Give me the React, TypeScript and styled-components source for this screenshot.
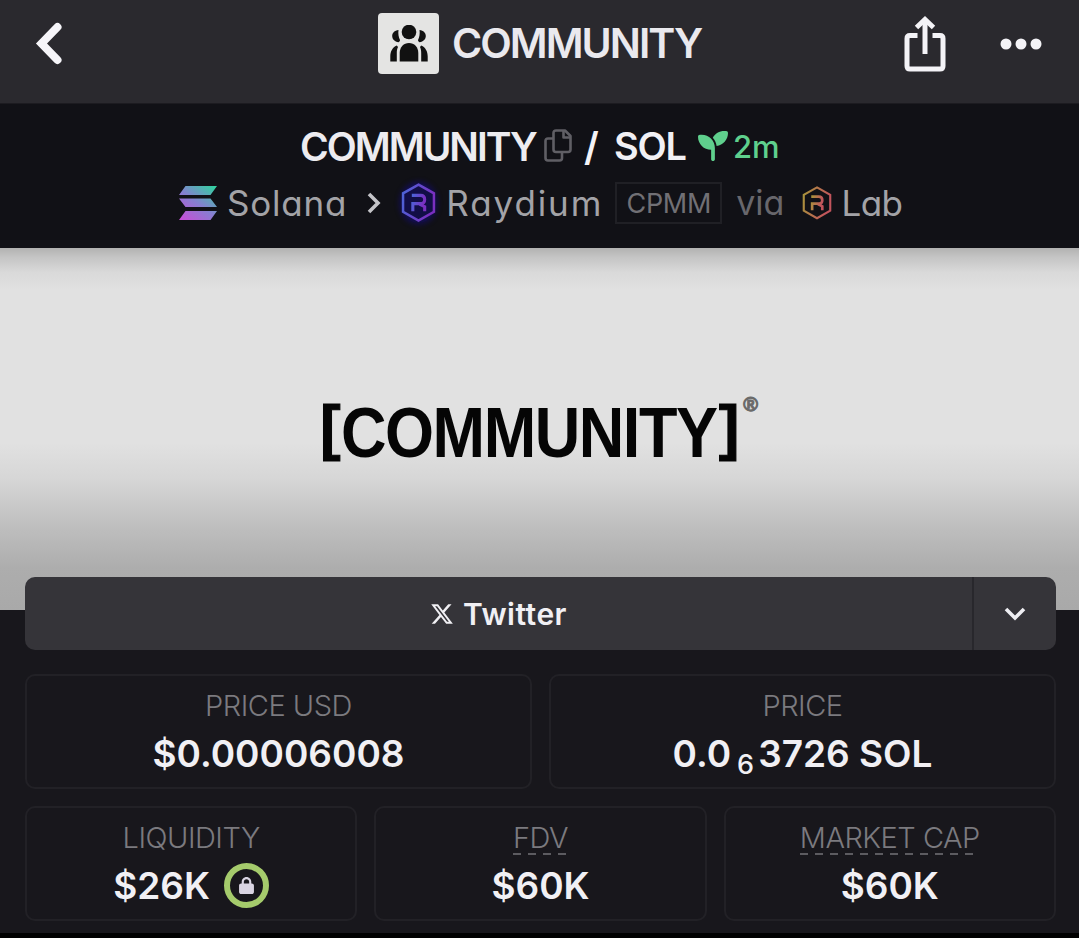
import type { ReactNode } from 'react';

import styled, { createGlobalStyle } from 'styled-components';
import { FaLock, FaSeedling, FaXTwitter } from 'react-icons/fa6';

const BOTTOM_STATS = [
  { label: 'LIQUIDITY', value: '$26K', locked: true },
  { label: 'FDV', value: '$60K', hint: true },
  { label: 'MARKET CAP', value: '$60K', hint: true },
];

const BackIcon = () => (
  <svg width='30' height='48' viewBox='0 0 30 48' fill='none'>
    <path d='M23.500 7L7.500 23.500L23.500 40' stroke='#f6f5f9' strokeWidth='8' strokeLinecap='round' />
  </svg>
);

const PeopleIcon = () => (
  <svg width='38' height='38' viewBox='0 0 38 38' fill='#111'>
    <circle cx='19' cy='7' r='7.300' />
    <path d='M8.500 5C4.500 5.500 2.200 8 2.200 11s2.300 5.800 6.300 6.200c1-.4 1.500-1.200 1.500-2.200C8.500 12 8 8.500 8.500 5z' />
    <path d='M29.500 5c4 .5 6.300 3 6.300 6s-2.300 5.800-6.300 6.200c-1-.4-1.500-1.200-1.500-2.200 1.500-3 2-6.500 1.500-10z' />
    <path d='M9.700 36.500V28c0-6 4-10 9.300-10s9.300 4 9.300 10v8.500z' />
    <path d='M0.300 36.500v-5c0-5 2-9 6.500-11l1.200 1.500c-1 2-1.200 4-1.200 6v8.500z' />
    <path d='M37.700 36.500v-5c0-5-2-9-6.500-11L30 22c1 2 1.200 4 1.200 6v8.500z' />
  </svg>
);

const ShareIcon = () => (
  <svg width='42' height='56' viewBox='0 0 42 56' fill='none' stroke='#f4f3f7' strokeWidth='5'>
    <path d='M13.500 19.500H6q-3 0-3 3V50q0 3 3 3h30q3 0 3-3V22.500q0-3-3-3h-7.500' />
    <path d='M21 38V5' />
    <path d='M12.500 11.500L21 3.500l8.500 8' />
  </svg>
);

const DotsIcon = () => (
  <svg width='42' height='12' viewBox='0 0 42 12' fill='#f4f3f7'>
    <circle cx='6' cy='6' r='5.500' />
    <circle cx='21' cy='6' r='5.500' />
    <circle cx='36' cy='6' r='5.500' />
  </svg>
);

const CopyIcon = () => (
  <svg width='28' height='34' viewBox='0 0 28 34' fill='none' stroke='#605f65' strokeWidth='2.600' strokeLinejoin='round'>
    <path d='M9.500 4q0-2.500 2.500-2.500h9L26.500 7v13.500q0 2.500-2.500 2.500H12q-2.500 0-2.500-2.500z' />
    <path d='M19.500 2v6.500H26' />
    <path d='M9.500 9.500H4q-2.500 0-2.500 2.500v17q0 2.500 2.500 2.500h11.500q2.500 0 2.500-2.500v-6' />
  </svg>
);

const SolanaIcon = () => (
  <svg width='40' height='35' viewBox='0 0 40 35'>
    <defs>
      <linearGradient id='sol' gradientUnits='userSpaceOnUse' x1='34' y1='0' x2='8' y2='36'>
        <stop offset='0' stopColor='#36cda2' />
        <stop offset='.5' stopColor='#8580d0' />
        <stop offset='1' stopColor='#c550d7' />
      </linearGradient>
    </defs>
    <path fill='url(#sol)' d='M7.500 0H39l-6.500 9H1zM1 12.500h31.500l6.500 8.500H7.500zM7.500 25H39l-6.500 9H1z' />
  </svg>
);

const RayIcon = ({ id, from, to, width }: { id: string; from: string; to: string; width: number }) => (
  <svg width={width} height={width * 1.12} viewBox='0 0 34 38' fill='none'>
    <defs>
      <linearGradient id={id} x1='0' y1='0' x2='1' y2='0.300'>
        <stop offset='0' stopColor={from} />
        <stop offset='1' stopColor={to} />
      </linearGradient>
    </defs>
    <g stroke={`url(#${id})`} strokeWidth='2.400'>
      <path d='M17 1.500L32 10v18L17 36.500L2 28V10z' />
      <path d='M10.500 12H19q4 0 4 4t-4 4h-7.500V27.500M18 20.500l5 2.500v4.500' strokeWidth='3' />
    </g>
  </svg>
);

const Chevron = ({ down }: { down?: boolean }) => (
  <ChevronSvg $down={down} width='14' height='24' viewBox='0 0 14 24' fill='none'>
    <path d='M2 3l9 9-9 9' stroke={down ? '#eeeef2' : '#c4c4c8'} strokeWidth='3.600' />
  </ChevronSvg>
);

const Stat = ({ label, hint, children }: { label: string; hint?: boolean; children: ReactNode }) => (
  <Card>
    <Label $hint={hint}>{label}</Label>
    <Value>{children}</Value>
  </Card>
);

export default function App() {
  return (
    <Page>
      <GlobalStyle />
      <Header>
        <BackIcon />
        <TokenTitle>
          <Avatar>
            <PeopleIcon />
          </Avatar>
          <TokenName>COMMUNITY</TokenName>
        </TokenTitle>
        <Actions>
          <ShareIcon />
          <DotsIcon />
        </Actions>
      </Header>

      <Pair>
        <PairRow>
          <PairName>COMMUNITY</PairName>
          <CopyIcon />
          <Slash>/</Slash>
          <Quote>SOL</Quote>
          <Age>
            <FaSeedling size={30} />
            <span>2m</span>
          </Age>
        </PairRow>
        <DexRow>
          <SolanaIcon />
          <DexName $left={9} $spacing={0.8}>Solana</DexName>
          <ChevronBox>
            <Chevron />
          </ChevronBox>
          <Glow>
            <RayIcon id='ray' from='#4a66d8' to='#7a2fc0' width={35} />
          </Glow>
          <DexName $left={10} $spacing={1.9}>Raydium</DexName>
          <Pool>CPMM</Pool>
          <Via>via</Via>
          <RayIcon id='lab' from='#a8963a' to='#c2545c' width={30} />
          <DexName $left={9} $spacing={-0.6}>Lab</DexName>
        </DexRow>
      </Pair>

      <Banner>
        <Bracket>[</Bracket>
        <Wordmark>COMMUNITY</Wordmark>
        <Bracket>]</Bracket>
        <Registered>®</Registered>
      </Banner>

      <Info>
        <Social>
          <TwitterLink>
            <FaXTwitter size={24} />
            <span>Twitter</span>
          </TwitterLink>
          <More>
            <Chevron down />
          </More>
        </Social>

        <Row>
          <Stat label='PRICE USD'>$0.00006008</Stat>
          <Stat label='PRICE'>
            0.0<Sub>6</Sub>3726 SOL
          </Stat>
        </Row>
        <Row>
          {BOTTOM_STATS.map(({ label, value, hint, locked }) => (
            <Stat key={label} label={label} hint={hint}>
              {value}
              {locked && (
                <LockBadge>
                  <FaLock size={17} />
                </LockBadge>
              )}
            </Stat>
          ))}
        </Row>
      </Info>
    </Page>
  );
}

const GlobalStyle = createGlobalStyle`
  * {
    box-sizing: border-box;
  }

  body {
    margin: 0;
    background: #000;
  }

  svg {
    flex-shrink: 0;
    display: block;
  }
`;

const Page = styled.div`
  width: 1079px;
  height: 938px;
  overflow: hidden;
  display: flex;
  flex-direction: column;
  background: #000;
  font-family: Inter, 'Open Sans', sans-serif;
  font-feature-settings: 'cv11';
  line-height: 1;
  white-space: nowrap;
`;

const Header = styled.header`
  height: 104px;
  padding: 0 37px 16px 34px;
  display: grid;
  grid-template-columns: 344px 1fr auto;
  align-items: center;
  background: #2a292e;
  border-bottom: 1px solid #1c1b20;
`;

const TokenTitle = styled.div`
  display: flex;
  align-items: center;
  gap: 13px;
`;

const Avatar = styled.div`
  width: 61px;
  height: 61px;
  border-radius: 4px;
  background: #e4e4e3;
  display: flex;
  align-items: center;
  justify-content: center;
`;

const TokenName = styled.h1`
  margin: 0;
  color: #eae9ee;
  font-size: 41px;
  font-weight: 600;
  letter-spacing: -1.95px;
`;

const Actions = styled.div`
  display: flex;
  align-items: center;
  gap: 54px;
`;

const Pair = styled.section`
  height: 144px;
  background: #111116;
  padding-top: 20px;
`;

const PairRow = styled.div`
  height: 44px;
  padding-left: 300px;
  display: flex;
  align-items: center;
`;

const PairName = styled.h2`
  margin: 0;
  width: 244px;
  color: #edecf0;
  font-size: 39px;
  font-weight: 600;
  letter-spacing: -2px;
`;

const Slash = styled.span`
  margin-left: 12px;
  width: 30px;
  color: #f4f3f7;
  font-size: 39px;
  font-weight: 600;
`;

const Quote = styled.span`
  width: 84px;
  color: #f1f0f4;
  font-size: 38px;
  font-weight: 600;
  letter-spacing: -1.2px;
`;

const Age = styled.span`
  display: flex;
  align-items: center;
  gap: 5px;
  color: #5fd08d;
  font-size: 31px;
  font-weight: 500;
`;

const DexRow = styled.div`
  height: 44px;
  margin-top: 13px;
  padding-left: 178px;
  display: flex;
  align-items: center;
`;

const DexName = styled.span<{ $left: number; $spacing: number }>`
  margin-left: ${({ $left }) => $left}px;
  color: #a3a3a7;
  font-size: 35px;
  letter-spacing: ${({ $spacing }) => $spacing}px;
`;

const ChevronBox = styled.span`
  margin: 0 20px;
`;

const ChevronSvg = styled.svg<{ $down?: boolean }>`
  transform: ${({ $down }) => ($down ? 'rotate(90deg)' : 'none')};
`;

const Glow = styled.span`
  border-radius: 50%;
  background: rgba(20, 10, 130, 0.45);
  box-shadow: 0 0 5px 2px rgba(20, 10, 130, 0.45);
`;

const Pool = styled.span`
  width: 107px;
  height: 42px;
  margin-left: 12px;
  border: 2px solid #202025;
  display: flex;
  align-items: center;
  justify-content: center;
  color: #717075;
  font-size: 27px;
  letter-spacing: -0.3px;
`;

const Via = styled.span`
  margin: 0 18px 0 14px;
  color: #68676c;
  font-size: 34px;
`;

const Banner = styled.section`
  height: 362px;
  padding: 0 0 0 320px;
  display: flex;
  align-items: flex-start;
  background: linear-gradient(
    #b2b2b1 0,
    #c4c4c4 9px,
    #d9d9d9 24px,
    #e1e1e1 42px,
    #e1e1e1 195px,
    #d6d6d6 232px,
    #c0c0c0 275px,
    #adadad 320px,
    #a9a9a9 362px
  );
  color: #050505;
  font-family: 'Liberation Sans', Arial, sans-serif;
  font-weight: 700;
`;

const Bracket = styled.span`
  margin-top: 148px;
  font-size: 62px;
  -webkit-text-stroke: 1px #050505;
`;

const Wordmark = styled.span`
  width: 378px;
  margin-top: 150px;
  font-size: 70px;
  letter-spacing: -1.6px;
  transform: scaleX(0.9);
  transform-origin: left;
`;

const Registered = styled.span`
  margin: 146px 0 0 4px;
  color: #6a6a6a;
  font-size: 20px;
  -webkit-text-stroke: 1px #6a6a6a;
`;

const Info = styled.section`
  height: 323px;
  padding: 0 23px 0 25px;
  display: flex;
  flex-direction: column;
  gap: 17px;
  background: #18171c;
`;

const Social = styled.div`
  height: 73px;
  margin: -33px 0 7px;
  flex-shrink: 0;
  display: flex;
  border-radius: 10px;
  background: #353439;
`;

const TwitterLink = styled.div`
  flex: 1;
  display: flex;
  align-items: center;
  justify-content: center;
  gap: 9px;
  color: #f1f0f4;
  font-size: 30px;
  font-weight: 600;
  letter-spacing: 0.5px;
`;

const More = styled.div`
  width: 84px;
  border-left: 2px solid #28272c;
  display: flex;
  align-items: center;
  justify-content: center;
`;

const Row = styled.div`
  display: flex;
  gap: 17px;
`;

const Card = styled.div`
  flex: 1;
  height: 115px;
  padding-top: 15px;
  border: 2px solid #222126;
  border-radius: 10px;
  display: flex;
  flex-direction: column;
  align-items: center;
`;

const Label = styled.span<{ $hint?: boolean }>`
  height: 32px;
  color: #7b7a7f;
  font-size: 29px;
  font-weight: 300;
  letter-spacing: -0.5px;
  background: ${({ $hint }) =>
    $hint ? 'repeating-linear-gradient(90deg, #5c5b60 0 8px, transparent 8px 15px) bottom / 100% 2px no-repeat' : 'none'};
`;

const Value = styled.span`
  height: 46px;
  display: flex;
  align-items: center;
  margin-top: 7px;
  white-space: pre;
  color: #f1f0f4;
  font-size: 37px;
  font-weight: 600;
`;

const Sub = styled.sub`
  margin: 22px 4px 0 6px;
  font-size: 27px;
  font-weight: 500;
`;

const LockBadge = styled.span`
  width: 45px;
  height: 45px;
  margin-left: 14px;
  border: 6px solid #a5cb6c;
  border-radius: 50%;
  display: flex;
  align-items: center;
  justify-content: center;
  color: #d9d4e2;
`;
